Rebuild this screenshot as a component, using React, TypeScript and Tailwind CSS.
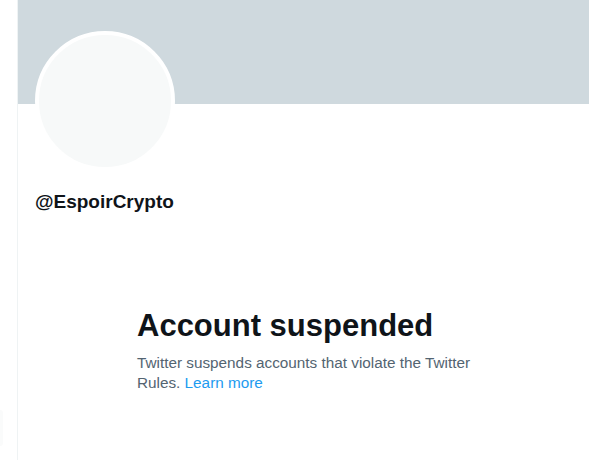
import React from "react";

const App = () => {
  return (
    <div className="relative flex h-[460px] w-[589px] overflow-hidden bg-white font-['Liberation_Sans',Arial,sans-serif]">
      {/* faint edge of something off-screen */}
      <div className="absolute left-0 top-[410px] h-[36px] w-[3px] rounded-r-full bg-[#fafbfb]" />

      <div className="w-[17px] shrink-0" />

      <main className="flex flex-1 flex-col border-l border-[#eff3f4]">
        <div className="h-[104px] w-full bg-[#cfd9de]" />

        <div className="px-[17px]">
          <div className="-mt-[73px] h-[140px] w-[140px] rounded-full border-4 border-white bg-[#f7f9f9]" />
          <div className="mt-[19px] text-[19px] font-bold leading-[24px] text-[#0f1419]">
            @EspoirCrypto
          </div>
        </div>

        <section className="ml-[119px] mt-[94px] w-[345px]">
          <h1 className="text-[31px] font-extrabold leading-[36px] text-[#0f1419]">
            Account suspended
          </h1>
          <p className="mt-[9px] text-[15.3px] leading-[20px] text-[#536471]">
            Twitter suspends accounts that violate the Twitter Rules.{" "}
            <span className="text-[#1d9bf0]">Learn more</span>
          </p>
        </section>
      </main>
    </div>
  );
};

export default App;
